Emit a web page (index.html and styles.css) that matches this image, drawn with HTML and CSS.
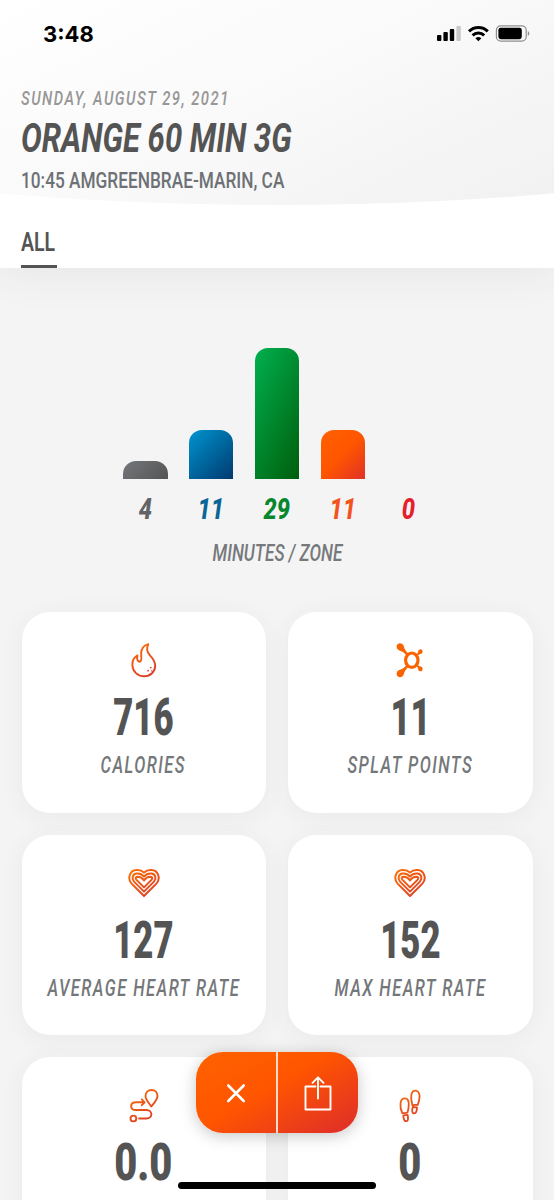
FILE: index.html
```html
<!DOCTYPE html>
<html lang="en">
    <head>
        <meta charset="utf-8">
        <title>Workout Summary</title>
        <link rel="stylesheet" href="styles.css">
    </head>

    <body>
        <!-- shared icon gradient and heart shape -->
        <svg class="defs" width="0" height="0">
            <defs>
                <linearGradient id="orange" gradientUnits="userSpaceOnUse" x1="4" y1="2" x2="28" y2="36">
                    <stop offset="0" stop-color="#fb7206"/>
                    <stop offset="1" stop-color="#d9342b"/>
                </linearGradient>
                <g id="heart" fill="none" stroke="url(#orange)" stroke-width="2" stroke-linejoin="round">
                    <path d="M16 31L3.600 18.600C-1 13.500 1.800 5.500 8.400 5.100C11.500 4.900 14.200 5.800 16 7.600C17.800 5.800 20.500 4.900 23.600 5.100C30.200 5.500 33 13.500 28.400 18.600Z"/>
                    <path d="M16 26.600L6 16.600C3.300 13.300 4.600 8.900 8.600 8.500C11.600 8.200 14.300 9.500 16 11.500C17.700 9.500 20.400 8.200 23.400 8.500C27.400 8.900 28.700 13.300 26 16.600Z"/>
                    <path d="M16 22.400L8.300 14.600C7 12.900 8 11.800 9.600 11.800C12 11.900 14.400 13.200 16 15.400C17.600 13.200 20 11.900 22.400 11.800C24 11.800 25 12.900 23.700 14.600Z"/>
                </g>
            </defs>
        </svg>

        <div class="header">
            <div class="hero">
                <div class="status-bar">
                    <span class="clock">3:48</span>
                    <svg width="96" height="20" viewBox="0 0 96 20">
                        <rect x="1" y="11" width="4.4" height="6" rx="1"/>
                        <rect x="7.4" y="8" width="4.4" height="9" rx="1"/>
                        <rect x="13.8" y="5" width="4.4" height="12" rx="1"/>
                        <rect x="20.4" y="2" width="4.4" height="15" rx="1" fill="#c8c8c8"/>
                        <g fill="none" stroke="#000" stroke-width="3">
                            <path d="M33 7.3a13.5 13.5 0 0 1 18.8 0"/>
                            <path d="M36.6 11.3a8.4 8.4 0 0 1 11.6 0"/>
                        </g>
                        <path d="M39.4 14.2a4.6 4.6 0 0 1 6 0l-3 3z"/>
                        <rect x="60.4" y="1.8" width="29.8" height="15.4" rx="4.4" fill="none" stroke="#8e8e8e" stroke-width="1.2"/>
                        <rect x="62.4" y="3.8" width="23.4" height="11.4" rx="2.4"/>
                        <path d="M91.8 7a2.8 2.8 0 0 1 0 5z" fill="#8e8e8e"/>
                    </svg>
                </div>
                <div class="class-info">
                    <p class="date"><span>SUNDAY, AUGUST 29, 2021</span></p>
                    <h1><span>ORANGE 60 MIN 3G</span></h1>
                    <p class="studio"><span>10:45 AMGREENBRAE-MARIN, CA</span></p>
                </div>
            </div>
            <div class="tabs">
                <div class="tab"><span>ALL</span></div>
            </div>
        </div>

        <div class="zones">
            <div class="chart">
                <div class="zone gray"><div class="bar" style="height: 18px"></div><span>4</span></div>
                <div class="zone blue"><div class="bar" style="height: 49px"></div><span>11</span></div>
                <div class="zone green"><div class="bar" style="height: 131px"></div><span>29</span></div>
                <div class="zone orange"><div class="bar" style="height: 49px"></div><span>11</span></div>
                <div class="zone red"><div class="bar" style="height: 0"></div><span>0</span></div>
            </div>
            <p class="chart-title"><span>MINUTES / ZONE</span></p>
        </div>

        <div class="cards">
            <div class="card">
                <svg class="icon" viewBox="0 0 32 36">
                    <path fill="none" stroke="url(#orange)" stroke-width="1.9" stroke-linejoin="round" d="M20.3 2.2C15 3.6 12.6 7.6 13.2 13.2C13.6 17 13.6 19.4 11.8 19.7C9.6 19.8 8.4 17 9.5 13.4C5.6 15.6 4.2 19.3 4.4 23.2C4.7 29.6 9.6 34.2 16 34.2C22.6 34.2 27.2 29.8 27.2 23.6C27.2 18.8 24.5 16 21.8 13.1C18.6 9.6 18.1 6.6 20.3 2.2Z"/>
                    <circle cx="22.8" cy="25.6" r=".9" fill="#df432b"/>
                    <circle cx="20.1" cy="28.7" r=".9" fill="#df432b"/>
                    <circle cx="23.4" cy="28.9" r=".6" fill="#df432b"/>
                </svg>
                <div class="value"><span>716</span></div>
                <div class="label"><span>CALORIES</span></div>
            </div>
            <div class="card">
                <svg class="icon" viewBox="0 0 32 36">
                    <g fill="#f96400">
                        <path d="M2.6 4.6C2.6 .4 8.6 -.2 9.9 4.4C10.4 7 11.6 8.5 14.2 11.4L12.4 13.2C10 10.7 8.6 9.4 6 8.7C3.8 8.1 2.6 6.6 2.6 4.6Z"/>
                        <path d="M2.6 31.8C2.6 36 8.6 36.6 9.9 32C10.4 29.4 11.6 27.9 14.2 25L12.4 23.2C10 25.7 8.6 27 6 27.7C3.8 28.3 2.6 29.8 2.6 31.8Z"/>
                        <path d="M28.6 9.5C28.6 6.6 24.6 6.4 24.2 9.3C24 11 23.5 11.7 22 13L23.3 14.1C24.6 12.8 25.2 12.3 26.6 12C28 11.7 28.6 10.8 28.6 9.5Z"/>
                        <path d="M28.6 27C28.6 29.9 24.6 30.1 24.2 27.2C24 25.5 23.5 24.8 22 23.5L23.3 22.4C24.6 23.7 25.2 24.2 26.6 24.5C28 24.8 28.6 25.7 28.6 27Z"/>
                    </g>
                    <ellipse cx="17.8" cy="18.2" rx="6.2" ry="7.2" fill="none" stroke="#f96400" stroke-width="3.2"/>
                </svg>
                <div class="value"><span>11</span></div>
                <div class="label"><span>SPLAT POINTS</span></div>
            </div>
            <div class="card">
                <svg class="icon" viewBox="0 0 32 36"><use href="#heart"/></svg>
                <div class="value"><span>127</span></div>
                <div class="label"><span>AVERAGE HEART RATE</span></div>
            </div>
            <div class="card">
                <svg class="icon" viewBox="0 0 32 36"><use href="#heart"/></svg>
                <div class="value"><span>152</span></div>
                <div class="label"><span>MAX HEART RATE</span></div>
            </div>
            <div class="card">
                <svg class="icon" viewBox="0 0 32 36">
                    <g fill="none" stroke="url(#orange)" stroke-width="1.9" stroke-linecap="round" stroke-linejoin="round">
                        <path d="M23.300 19.500C20.500 15.600 17.500 12.500 17.500 9C17.500 5.400 20 3 23.500 3C27 3 29.500 5.400 29.500 9C29.500 12.500 26.500 15.600 23.300 19.500Z"/>
                        <path d="M13.800 12.400L16.600 15.300L13.800 18.200M16 15.300H8C1.500 15.300 1.500 23 8 23H18.500C25 23 25 31.500 18.500 31.500H11"/>
                        <circle cx="5.400" cy="31.500" r="2.900"/>
                    </g>
                </svg>
                <div class="value wide"><span>0.0</span></div>
            </div>
            <div class="card">
                <svg class="icon" viewBox="0 0 32 36">
                    <g fill="none" stroke="url(#orange)" stroke-width="1.8" stroke-linejoin="round">
                        <path d="M8.300 26.200C6.500 22.500 6.100 20 6.500 16.500C6.900 12.800 8.500 11.300 10.900 11.300C13.500 11.300 15 13.500 14.700 18.500C14.600 21.500 14.200 23.500 13.500 25.500C11.500 26.500 10 25.800 8.300 26.200Z"/>
                        <path d="M9.300 28.300L13.600 27.800C14.300 31 14.400 33.800 12.500 34.200C10 34.500 9.500 31.500 9.300 28.300Z"/>
                        <path d="M18.300 18C17 13.500 16.700 11 17.400 7.500C18.100 4.700 19.600 3.600 21.800 3.700C25 4 25.900 7.500 25.400 11.500C25.100 14 24.500 15.800 23.700 18C21.700 17.500 20.200 18.300 18.300 18Z"/>
                        <path d="M18.700 20L23 20.400C22.900 24 22 26.500 20 26.400C17.800 26.200 17.900 23.300 18.700 20Z"/>
                    </g>
                </svg>
                <div class="value wide"><span>0</span></div>
            </div>
        </div>

        <!-- floating close / share buttons -->
        <div class="actions">
            <button aria-label="Close">
                <svg width="40" height="40" viewBox="0 0 40 40">
                    <path d="M12.300 12.500L27.700 28M27.700 12.500L12.300 28" stroke-width="2.600"/>
                </svg>
            </button>
            <button aria-label="Share">
                <svg width="40" height="40" viewBox="0 0 40 40">
                    <path d="M17.500 13.500H7.500V36.500H32.500V13.500H22.500M20 25.500V4.500M14.500 9.800L20 4.300L25.500 9.800" stroke-width="1.900"/>
                </svg>
            </button>
        </div>
        <div class="home-indicator"></div>
    </body>
</html>
```

FILE: styles.css
```css
* {
    box-sizing: border-box;
}

body {
    margin: 0;
    height: 1200px;
    overflow: hidden;
    background-color: #f4f4f4;
    font-family: Roboto, "Liberation Sans", sans-serif;
    color: #545454;
}

p, h1 {
    margin: 0;
}

/* condensed lettering: each text is squeezed sideways */
p span, h1 span, .tab span, .zone span, .value span, .label span {
    display: inline-block;
    white-space: nowrap;
    transform: scaleX(0.75);
}

.defs {
    position: absolute;
}

.header {
    height: 268px;
    background-color: #fff;
    box-shadow: 0 4px 40px rgba(60, 60, 70, 0.08);
}

.hero {
    height: 205px;
    background: linear-gradient(155deg, #ffffff 0%, #fafafa 45%, #f1f1f2 100%);
    clip-path: ellipse(150% 100% at 50% 0);
}

.status-bar {
    height: 67px;
    padding: 0 22px 0 43px;
    display: flex;
    align-items: center;
    justify-content: space-between;
    color: #000;
}

.clock {
    font-family: Inter, sans-serif;
    font-size: 22px;
    font-weight: 700;
}

.class-info {
    padding: 19px 21px 0;
}

.class-info span, .tab span {
    transform-origin: left;
}

.date {
    font-size: 20px;
    line-height: 24px;
    font-style: italic;
    font-weight: 500;
    letter-spacing: 2px;
    color: #979797;
}

.date span {
    transform: scaleX(0.74);
}

h1 {
    margin: 6px 0 8px;
    font-size: 41px;
    line-height: 44px;
    font-style: italic;
    font-weight: 700;
}

h1 span {
    transform: scaleX(0.757);
}

.studio {
    font-size: 22.5px;
    line-height: 24px;
    font-weight: 500;
    color: #6d7175;
}

.studio span {
    transform: scaleX(0.767);
}

.tabs {
    height: 63px;
    padding: 24px 21px 0;
}

.tab {
    width: 36px;
    height: 39px;
    font-size: 26px;
    line-height: 26px;
    font-weight: 600;
    border-bottom: 3px solid #545454;
}

.zones {
    height: 344px;
    padding-top: 80px;
}

.chart {
    display: flex;
    justify-content: center;
    align-items: flex-end;
    gap: 21.5px;
}

.zone {
    width: 44.3px;
    display: flex;
    flex-direction: column;
    align-items: center;
}

.bar {
    width: 100%;
    border-radius: 13px 13px 0 0;
}

.zone span {
    margin-top: 12px;
    font-size: 30px;
    line-height: 36px;
    font-style: italic;
    font-weight: 800;
    transform: scaleX(0.79);
}

.gray .bar {
    background: linear-gradient(135deg, #74777b, #545454);
}

.gray {
    color: #616366;
}

.blue .bar {
    background: linear-gradient(135deg, #0095cf, #003a70);
}

.blue {
    color: #0b6496;
}

.green .bar {
    background: linear-gradient(115deg, #00b04f, #005e0c);
}

.green {
    color: #08872e;
}

.orange .bar {
    background: linear-gradient(135deg, #ff6200, #ff5500 50%, #e03127);
}

.orange {
    color: #f4521c;
}

.red {
    color: #e5202b;
}

.chart-title {
    margin-top: 15px;
    text-align: center;
    font-size: 23px;
    line-height: 24px;
    font-style: italic;
    font-weight: 500;
    color: #76797c;
}

.cards {
    padding: 0 21.5px;
    display: grid;
    grid-template-columns: repeat(2, minmax(0, 1fr));
    gap: 22px;
}

.card {
    height: 200.5px;
    padding-top: 30px;
    display: flex;
    flex-direction: column;
    align-items: center;
    background-color: #fff;
    border-radius: 28px;
    box-shadow: 0 4px 24px rgba(60, 60, 75, 0.06);
}

.icon {
    width: 32px;
    height: 36px;
    flex-shrink: 0;
}

.value {
    margin-top: 13px;
    font-size: 51px;
    line-height: 54px;
    font-weight: 900;
}

.value span {
    transform: scaleX(0.68);
}

.value.wide span {
    transform: scaleX(0.78);
}

.label {
    margin-top: 9px;
    font-size: 23px;
    line-height: 24px;
    font-style: italic;
    font-weight: 500;
    letter-spacing: 2px;
    color: #74777a;
}

.label span {
    transform: scaleX(0.72);
}

.actions {
    position: absolute;
    left: 196px;
    top: 1052px;
    width: 162px;
    height: 81px;
    display: flex;
    overflow: hidden;
    background: linear-gradient(150deg, #ff6200 0%, #ff5500 45%, #dd2c2c 100%);
    border-radius: 27px;
    box-shadow: 0 3px 16px rgba(0, 0, 0, 0.22);
}

.actions button {
    flex: 1;
    padding: 0;
    display: flex;
    align-items: center;
    justify-content: center;
    background: none;
    border: none;
}

.actions button + button {
    border-left: 2px solid #ffd9c8;
}

.actions path {
    fill: none;
    stroke: #fff;
    stroke-linecap: round;
    stroke-linejoin: round;
}

.home-indicator {
    position: absolute;
    left: 178px;
    top: 1182px;
    width: 198px;
    height: 7px;
    background-color: #000;
    border-radius: 4px;
}
```
